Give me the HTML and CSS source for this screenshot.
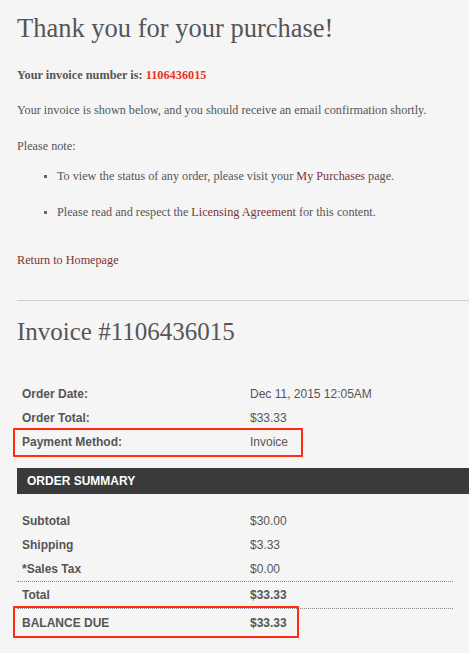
FILE: index.html
```html
<!DOCTYPE html>
<html>
<head>
<meta charset="utf-8">
<link rel="stylesheet" href="styles.css">
</head>
<body>
<div class="page">
  <h1 class="title">Thank you for your purchase!</h1>
  <p class="invno">Your invoice number is: <span class="num">1106436015</span></p>
  <p class="text">Your invoice is shown below, and you should receive an email confirmation shortly.</p>
  <p class="text note">Please note:</p>
  <ul class="notes">
    <li>To view the status of any order, please visit your <a class="link">My Purchases</a> page.</li>
    <li>Please read and respect the <a class="link">Licensing Agreement</a> for this content.</li>
  </ul>
  <p class="text home"><a class="link">Return to Homepage</a></p>
  <hr class="rule">
  <h2 class="invoice">Invoice #1106436015</h2>

  <div class="table info">
    <div class="row"><div class="lbl">Order Date:</div><div class="val">Dec 11, 2015 12:05AM</div></div>
    <div class="row"><div class="lbl">Order Total:</div><div class="val">$33.33</div></div>
    <div class="row"><div class="lbl">Payment Method:</div><div class="val">Invoice</div><span class="box box1"></span></div>
  </div>

  <div class="bar">ORDER SUMMARY</div>

  <div class="table summary">
    <div class="row"><div class="lbl">Subtotal</div><div class="val">$30.00</div></div>
    <div class="row"><div class="lbl">Shipping</div><div class="val">$3.33</div></div>
    <div class="row"><div class="lbl">*Sales Tax</div><div class="val">$0.00</div></div>
    <div class="row total"><div class="lbl">Total</div><div class="val strong">$33.33</div></div>
    <div class="row due"><div class="lbl">BALANCE DUE</div><div class="val strong">$33.33</div><span class="box box2"></span></div>
  </div>
</div>
</body>
</html>
```

FILE: styles.css
```css
html, body {
  margin: 0;
  padding: 0;
  background: #f5f5f5;
}
.page {
  padding: 0 0 20px 17px;
  color: #555;
  font-family: "Liberation Serif", serif;
}
.title {
  margin: 11px 0 0;
  font-size: 26.5px;
  font-weight: normal;
  line-height: 34px;
  color: #555;
}
.invno {
  margin: 22px 0 0;
  font-size: 12.3px;
  font-weight: bold;
  line-height: 16px;
}
.num { color: #e8341f; }
.text {
  margin: 19px 0 0;
  font-size: 12.2px;
  line-height: 16px;
}
.note { margin-top: 20px; }
.notes {
  margin: 14px 0 0;
  padding-left: 40px;
  font-size: 12.2px;
  line-height: 16px;
  list-style: none;
}
.notes li {
  position: relative;
  margin-bottom: 20px;
}
.notes li::before {
  content: "";
  position: absolute;
  left: -13px;
  top: 7px;
  width: 3px;
  height: 3px;
  background: #666;
}
.link { color: #7b3434; text-decoration: none; }
.home { margin-top: 32px; }
.rule {
  margin: 32px 0 0;
  border: 0;
  border-top: 1px solid #cfcfcf;
  height: 0;
}
.invoice {
  margin: 16px 0 0;
  font-size: 25px;
  font-weight: normal;
  line-height: 30px;
  color: #555;
}
.table {
  width: 436px;
  font-family: "Liberation Sans", Arial, sans-serif;
  font-size: 12px;
  color: #555;
}
.info { margin-top: 35px; }
.row {
  position: relative;
  display: grid;
  grid-template-columns: 228px 1fr;
  height: 24px;
  align-items: center;
}
.lbl { padding-left: 5px; font-weight: bold; }
.val { padding-left: 5px; }
.strong { font-weight: bold; }
.bar {
  margin-top: 14px;
  height: 26px;
  background: #3a3a3a;
  color: #fff;
  font-family: "Liberation Sans", Arial, sans-serif;
  font-weight: bold;
  font-size: 12px;
  line-height: 26px;
  padding-left: 10px;
}
.summary { margin-top: 15px; }
.total {
  height: 26px;
  border-top: 1px dotted #888;
  border-bottom: 1px dotted #888;
}
.due { height: 27px; }
.box {
  position: absolute;
  left: -4px;
  border: 2px solid #ff2a10;
  border-radius: 1px;
  pointer-events: none;
}
.box1 { top: -2px; width: 286px; height: 25px; }
.box2 { top: -3px; width: 282px; height: 28px; }
```
